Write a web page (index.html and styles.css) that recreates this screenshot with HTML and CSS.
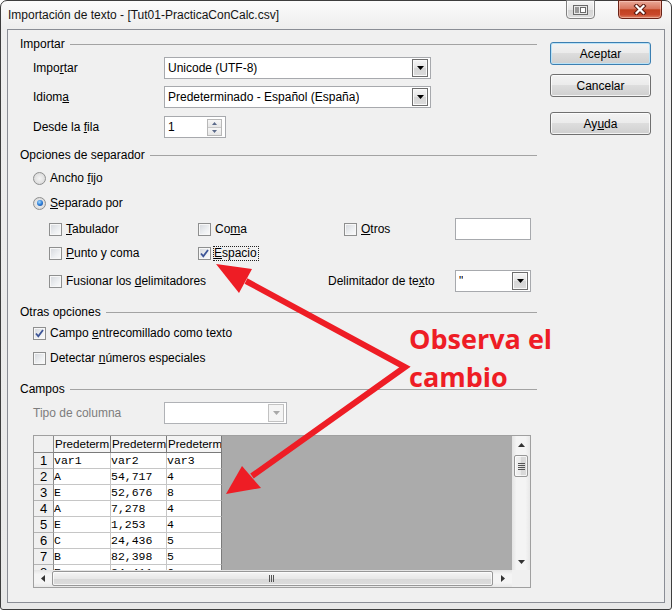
FILE: index.html
```
<!DOCTYPE html>
<html lang="es">
<head>
<meta charset="utf-8">
<title>Importación de texto</title>
<link rel="stylesheet" href="styles.css">
</head>
<body>
<div class="window">
  <div class="titlebar">
    <span class="title">Importación de texto - [Tut01-PracticaConCalc.csv]</span>
    <div class="tbtn restore">
      <svg width="15" height="10" viewBox="0 0 15 10"><rect x="0.5" y="0.5" width="14" height="9" fill="#e9e9e9" stroke="#6a6a6a"/><rect x="2" y="2" width="4" height="6" fill="#9a9a9a"/><rect x="7.5" y="2.5" width="5" height="5" fill="#fff" stroke="#6a6a6a"/></svg>
    </div>
    <div class="tbtn close">
      <svg width="14" height="11" viewBox="0 0 14 11"><path d="M3.5 2 L10.5 9 M10.5 2 L3.5 9" stroke="#5a1a10" stroke-width="4.2" stroke-linecap="square"/><path d="M3.5 2 L10.5 9 M10.5 2 L3.5 9" stroke="#ffffff" stroke-width="2.2" stroke-linecap="square"/></svg>
    </div>
  </div>

  <div class="panel">
    <div class="main">
      <div class="grp mt4"><span>Importar</span><i class="rule"></i></div>
      <div class="row mt3">
        <span class="lbl">Impo<u>r</u>tar</span>
        <div class="sel w267"><span class="val">Unicode (UTF-8)</span><span class="dd"><svg width="7" height="4" viewBox="0 0 7 4"><polygon points="0,0 7,0 3.5,4" fill="#000"/></svg></span></div>
      </div>
      <div class="row mt7">
        <span class="lbl">Idiom<u>a</u></span>
        <div class="sel w267"><span class="val">Predeterminado - Español (España)</span><span class="dd"><svg width="7" height="4" viewBox="0 0 7 4"><polygon points="0,0 7,0 3.5,4" fill="#000"/></svg></span></div>
      </div>
      <div class="row mt8">
        <span class="lbl">Desde la <u>f</u>ila</span>
        <div class="spin"><span class="val">1</span>
          <span class="spinbtns">
            <span class="sb"><svg width="5" height="3" viewBox="0 0 5 3"><polygon points="0,3 5,3 2.5,0" fill="#5b6a8a"/></svg></span>
            <span class="sb"><svg width="5" height="3" viewBox="0 0 5 3"><polygon points="0,0 5,0 2.5,3" fill="#5b6a8a"/></svg></span>
          </span>
        </div>
      </div>

      <div class="grp mt7"><span>Opciones de separador</span><i class="rule"></i></div>
      <div class="row h20 mt3"><span class="rb"></span><span>Ancho <u>f</u>ijo</span></div>
      <div class="row h20 mt5"><span class="rb on"></span><span><u>S</u>eparado por</span></div>
      <div class="row sub mt5">
        <span class="cell c1"><span class="cb"></span><span><u>T</u>abulador</span></span>
        <span class="cell c2"><span class="cb"></span><span>Co<u>m</u>a</span></span>
        <span class="cell c3"><span class="cb"></span><span><u>O</u>tros</span></span>
        <span class="txt w76"></span>
      </div>
      <div class="row sub h20 mt3">
        <span class="cell c1"><span class="cb"></span><span><u>P</u>unto y coma</span></span>
        <span class="cell c2"><span class="cb"><svg width="11" height="11" viewBox="0 0 11 11"><path d="M2 5.5 L4.3 8.3 L9 2" fill="none" stroke="#3d5597" stroke-width="1.8"/></svg></span><span class="focus"><u>E</u>spacio</span></span>
      </div>
      <div class="row sub mt7">
        <span class="cell c4"><span class="cb"></span><span>Fusionar los <u>d</u>elimitadores</span></span>
        <span class="cell c5">Delimitador de te<u>x</u>to</span>
        <div class="sel w76"><span class="val">"</span><span class="dd"><svg width="7" height="4" viewBox="0 0 7 4"><polygon points="0,0 7,0 3.5,4" fill="#000"/></svg></span></div>
      </div>

      <div class="grp mt10"><span>Otras opciones</span><i class="rule"></i></div>
      <div class="row h20 mt1"><span class="cb"><svg width="11" height="11" viewBox="0 0 11 11"><path d="M2 5.5 L4.3 8.3 L9 2" fill="none" stroke="#3d5597" stroke-width="1.8"/></svg></span><span>Campo <u>e</u>ntrecomillado como texto</span></div>
      <div class="row h20 mt5"><span class="cb"></span><span>Detectar <u>n</u>úmeros especiales</span></div>

      <div class="grp mt11"><span>Campos</span><i class="rule"></i></div>
      <div class="row mt3">
        <span class="lbl dis">Tipo de columna</span>
        <div class="sel w123 disabled"><span class="val"></span><span class="dd"><svg width="7" height="4" viewBox="0 0 7 4"><polygon points="0,0 7,0 3.5,4" fill="#a8a8a8"/></svg></span></div>
      </div>

      <div class="grid mt11">
        <div class="sheetwrap">
          <div class="sheet">
            <div class="corner"></div><div class="ch">Predeterm</div><div class="ch">Predeterm</div><div class="ch last">Predeterm</div>
            <div class="rh">1</div><div class="d">var1</div><div class="d">var2</div><div class="d last">var3</div>
            <div class="rh">2</div><div class="d">A</div><div class="d">54,717</div><div class="d last">4</div>
            <div class="rh">3</div><div class="d">E</div><div class="d">52,676</div><div class="d last">8</div>
            <div class="rh">4</div><div class="d">A</div><div class="d">7,278</div><div class="d last">4</div>
            <div class="rh">5</div><div class="d">E</div><div class="d">1,253</div><div class="d last">4</div>
            <div class="rh">6</div><div class="d">C</div><div class="d">24,436</div><div class="d last">5</div>
            <div class="rh">7</div><div class="d">B</div><div class="d">82,398</div><div class="d last">5</div>
            <div class="rh">8</div><div class="d">E</div><div class="d">34,411</div><div class="d last">6</div>
          </div>
        </div>
        <div class="vs">
          <span class="varr"><svg width="7" height="4" viewBox="0 0 7 4"><polygon points="0,4 7,4 3.5,0" fill="#333"/></svg></span>
          <span class="vthumb"><svg width="7" height="7" viewBox="0 0 7 7"><path d="M0 0.5H7M0 2.5H7M0 4.5H7M0 6.5H7" stroke="#555" stroke-width="1"/></svg></span>
          <span class="vspace"></span>
          <span class="varr dn"><svg width="7" height="4" viewBox="0 0 7 4"><polygon points="0,0 7,0 3.5,4" fill="#333"/></svg></span>
        </div>
        <div class="hs">
          <span class="harr"><svg width="4" height="7" viewBox="0 0 4 7"><polygon points="4,0 4,7 0,3.5" fill="#333"/></svg></span>
          <span class="hthumb"><svg width="7" height="7" viewBox="0 0 7 7"><path d="M0.5 0V7M2.5 0V7M4.5 0V7" stroke="#555" stroke-width="1"/></svg></span>
          <span class="harr r"><svg width="4" height="7" viewBox="0 0 4 7"><polygon points="0,0 0,7 4,3.5" fill="#333"/></svg></span>
        </div>
        <div class="sc"></div>
      </div>
    </div>

    <div class="side">
      <div class="btn default">Aceptar</div>
      <div class="btn mt9">Cancelar</div>
      <div class="btn mt15">Ay<u>u</u>da</div>
    </div>
  </div>

  <svg class="annot" width="672" height="610" viewBox="0 0 672 610">
    <polyline points="246,281 405,367 252,476" fill="none" stroke="#ee1d25" stroke-width="6" stroke-linejoin="miter" stroke-miterlimit="10"/>
    <polygon points="216,264 252,269 239,293" fill="#ee1d25"/>
    <polygon points="226,494 242,466 261,488" fill="#ee1d25"/>
  </svg>
  <div class="note">Observa el<br>cambio</div>
</div>
</body>
</html>
```
FILE: styles.css
```
* { box-sizing: border-box; }
html, body { margin: 0; }
body {
  width: 672px;
  height: 610px;
  overflow: hidden;
  background: #ffffff;
  font-family: "Liberation Sans", Arial, sans-serif;
  font-size: 12px;
  color: #000;
}
u { text-decoration: underline; text-underline-offset: 1px; }

.window {
  position: relative;
  width: 672px;
  height: 610px;
  border: 1px solid #3d3d3d;
  border-radius: 7px 7px 3px 3px;
  background: linear-gradient(180deg, #fbfbfb 0, #eeeeee 27px, #e8e8e8 100%);
  padding: 0 6px 6px;
  display: flex;
  flex-direction: column;
}

.titlebar {
  height: 28px;
  margin: 0 -6px;
  display: flex;
  align-items: flex-start;
}
.title {
  margin: 7px 0 0 7px;
  line-height: 14px;
  color: #141414;
}
.tbtn {
  height: 19px;
  margin-top: -1px;
  border: 1px solid #808080;
  border-radius: 0 0 4px 4px;
  display: flex;
  align-items: center;
  justify-content: center;
}
.restore {
  margin-left: auto;
  width: 29px;
  background: linear-gradient(180deg, #f6f6f6, #e6e6e6 50%, #d4d4d4 52%, #dedede);
  box-shadow: inset 0 0 0 1px rgba(255,255,255,0.7);
}
.close {
  margin-left: 23px;
  margin-right: 9px;
  width: 44px;
  border-color: #6a2216;
  background: linear-gradient(180deg, #eaa898 0, #d8765f 45%, #c0401f 52%, #c9482b 80%, #de8566 100%);
  box-shadow: inset 0 0 0 1px rgba(255,220,210,0.45);
}

.panel {
  flex: 1;
  border: 1px solid #8a8d95;
  background: #f0f0f0;
  display: flex;
}
.main {
  width: 532px;
  display: flex;
  flex-direction: column;
}
.side {
  width: 101px;
  margin-left: 10px;
  padding-top: 12px;
  display: flex;
  flex-direction: column;
}

.mt1 { margin-top: 1px; }
.mt3 { margin-top: 3px; }
.mt4 { margin-top: 4px; }
.mt5 { margin-top: 5px; }
.mt7 { margin-top: 7px; }
.mt8 { margin-top: 8px; }
.mt9 { margin-top: 9px; }
.mt10 { margin-top: 10px; }
.mt11 { margin-top: 11px; }
.mt15 { margin-top: 15px; }

.grp {
  height: 20px;
  display: flex;
  align-items: center;
  padding: 0 3px 0 12px;
  white-space: nowrap;
}
.rule {
  flex: 1;
  height: 0;
  margin-left: 5px;
  margin-top: 1px;
  border-top: 1px solid #a3a3a3;
}

.row {
  display: flex;
  align-items: center;
  height: 22px;
  padding-left: 25px;
  white-space: nowrap;
}
.row.sub { padding-left: 41px; }
.row.h20 { height: 20px; }
.lbl { width: 131px; }
.lbl.dis { color: #7d7d7d; }

.cell { display: flex; align-items: center; }
.c1 { width: 149px; }
.c2 { width: 146px; }
.c3 { width: 111px; }
.c4 { width: 279px; }
.c5 { width: 127px; }

.sel, .spin, .txt {
  height: 22px;
  border: 1px solid #a7a9ad;
  background: #fff;
  display: flex;
  align-items: center;
  padding-left: 3px;
}
.w267 { width: 267px; }
.w123 { width: 123px; }
.w76 { width: 76px; }
.val { line-height: 20px; white-space: nowrap; overflow: hidden; }
.dd {
  margin-left: auto;
  margin-right: 2px;
  width: 16px;
  height: 18px;
  border: 1px solid #6e6e6e;
  background: linear-gradient(180deg, #f6f6f6, #e4e4e4 50%, #d6d6d6 51%, #dcdcdc);
  box-shadow: inset 0 0 0 1px #fafafa;
  display: flex;
  align-items: center;
  justify-content: center;
  flex: none;
}
.sel.disabled { border-color: #b0b2b6; }
.sel.disabled .dd {
  border-color: #c2c2c2;
  background: #f4f4f4;
  box-shadow: none;
}

.spin { width: 62px; }
.spinbtns {
  margin-left: auto;
  margin-right: 3px;
  width: 15px;
  height: 17px;
  display: flex;
  flex-direction: column;
  border: 1px solid #b8b8b8;
}
.sb {
  flex: 1;
  display: flex;
  align-items: center;
  justify-content: center;
  background: linear-gradient(180deg, #f7f7f7, #e6e6e6);
}
.sb + .sb { border-top: 1px solid #c8c8c8; }

.cb {
  width: 13px;
  height: 13px;
  flex: none;
  margin-right: 4px;
  border: 1px solid #8e8f8f;
  background: linear-gradient(135deg, #d4d7dc 0, #eef0f2 60%, #fbfbfb 100%);
  box-shadow: inset 0 0 0 1px #f7f7f7;
  display: flex;
  align-items: center;
  justify-content: center;
}
.rb {
  width: 13px;
  height: 13px;
  flex: none;
  margin-right: 4px;
  border-radius: 50%;
  border: 1px solid #8e8f8f;
  background: radial-gradient(circle at 50% 50%, #f4f4f4 0, #e2e2e2 55%, #cfcfcf 100%);
  display: flex;
  align-items: center;
  justify-content: center;
}
.rb.on::after {
  content: "";
  width: 6px;
  height: 6px;
  border-radius: 50%;
  background: radial-gradient(circle at 40% 35%, #a6dcff 0, #2f7fd8 50%, #0b3d8f 100%);
}
.focus {
  display: inline-block;
  margin-left: -2px;
  padding: 0 1px 0 0;
  border: 1px dotted #222;
  line-height: 13px;
}

.btn {
  height: 23px;
  border: 1px solid #707070;
  border-radius: 3px;
  background: linear-gradient(180deg, #f3f3f3 0, #ebebeb 48%, #dddddd 50%, #cfcfcf 100%);
  box-shadow: inset 0 0 0 1px rgba(255,255,255,0.75);
  display: flex;
  align-items: center;
  justify-content: center;
}
.btn.default {
  border-color: #3c7fb1;
  box-shadow: inset 0 0 0 1px #b9e2f7;
}

.grid {
  margin-left: 25px;
  width: 498px;
  height: 153px;
  border: 1px solid #a0a0a0;
  display: grid;
  grid-template-columns: 478px 18px;
  grid-template-rows: 134px 17px;
}
.sheetwrap {
  background: #ababab;
  overflow: hidden;
}
.sheet {
  display: grid;
  grid-template-columns: 20px 57px 56px 55px;
  grid-template-rows: 17px;
  grid-auto-rows: 16px;
  width: 188px;
}
.corner {
  background: #f0f0f0;
  border-right: 1px solid #8a8a8a;
  border-bottom: 1px solid #8a8a8a;
}
.ch {
  background: #f4f4f4;
  border-right: 1px solid #7a7a7a;
  border-bottom: 1px solid #7a7a7a;
  padding-left: 1px;
  font-size: 11.6px;
  line-height: 16px;
  white-space: nowrap;
  overflow: hidden;
}
.rh {
  background: #f0f0f0;
  border-right: 1px solid #8a8a8a;
  border-bottom: 1px solid #b4b4b4;
  font-size: 13px;
  line-height: 15px;
  text-align: center;
}
.d {
  background: #fff;
  border-right: 1px solid #c6c6c6;
  border-bottom: 1px solid #c6c6c6;
  font-family: "Liberation Mono", "Courier New", monospace;
  font-size: 11.5px;
  line-height: 15px;
  white-space: nowrap;
  overflow: hidden;
}
.ch.last, .d.last { border-right-color: #7a7a7a; }

.vs {
  display: flex;
  flex-direction: column;
  align-items: center;
  background: linear-gradient(90deg, #e4e4e4, #f4f4f4 25%, #f4f4f4 75%, #e8e8e8);
}
.varr {
  height: 19px;
  width: 18px;
  display: flex;
  align-items: center;
  justify-content: center;
  padding-bottom: 1px;
}
.varr.dn { height: 17px; padding-bottom: 0; padding-top: 0; }
.vthumb {
  width: 14px;
  height: 22px;
  border: 1px solid #979797;
  border-radius: 2px;
  background: linear-gradient(90deg, #f5f5f5, #e8e8e8 50%, #d8d8d8 52%, #dcdcdc);
  box-shadow: inset 0 0 0 1px rgba(255,255,255,0.7);
  display: flex;
  align-items: center;
  justify-content: center;
}
.vspace { flex: 1; }

.hs {
  display: flex;
  align-items: center;
  background: linear-gradient(180deg, #e4e4e4, #f4f4f4 25%, #f4f4f4 75%, #e8e8e8);
}
.harr {
  width: 18px;
  height: 17px;
  display: flex;
  align-items: center;
  justify-content: center;
}
.harr.r { width: 19px; }
.hthumb {
  width: 441px;
  height: 15px;
  border: 1px solid #979797;
  border-radius: 2px;
  background: linear-gradient(180deg, #f5f5f5, #e8e8e8 50%, #d8d8d8 52%, #dcdcdc);
  box-shadow: inset 0 0 0 1px rgba(255,255,255,0.7);
  display: flex;
  align-items: center;
  justify-content: center;
}
.sc { background: #f0f0f0; }

.annot {
  position: absolute;
  left: -1px;
  top: -1px;
  pointer-events: none;
}
.note {
  position: absolute;
  left: 408px;
  top: 319px;
  font-family: "Open Sans", "Noto Sans", sans-serif;
  font-weight: 700;
  font-size: 27px;
  line-height: 38px;
  color: #ee1d25;
  white-space: nowrap;
}
```
